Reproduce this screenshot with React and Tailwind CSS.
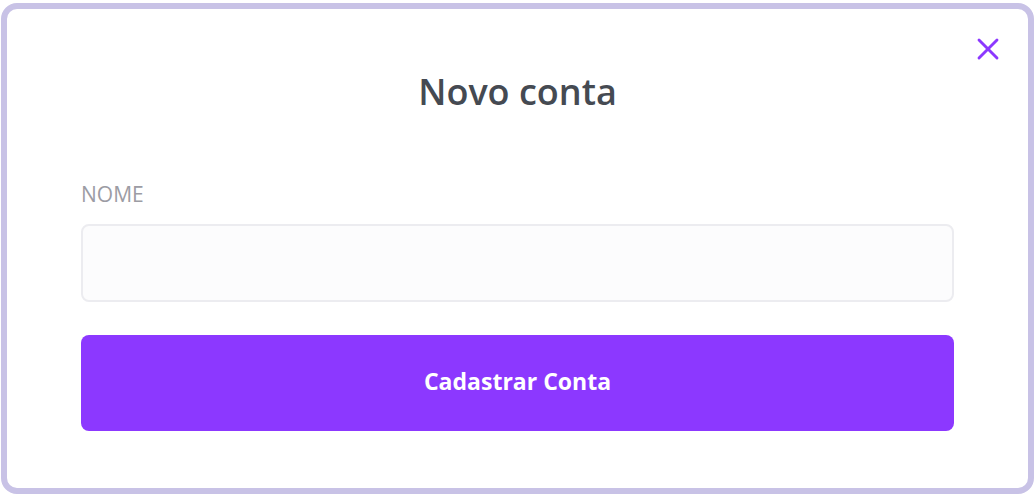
import React from "react";
import { X } from "lucide-react";

export default function App() {
  return (
    <div className="w-[1036px] h-[495px] bg-white pt-[3px] pl-[1px]" style={{ fontFamily: '"Open Sans", sans-serif' }}>
      <div className="relative w-[1033px] h-[491px] border-[6px] border-[#c8c2e6] rounded-[16px] bg-white px-[74px]">
        <button className="absolute right-[22px] top-[22px] text-[#8c38ff]" aria-label="Fechar">
          <X className="w-[36px] h-[36px]" strokeWidth={1.9} />
        </button>

        <h1 className="text-center text-[36px] font-semibold text-[#454a52] pt-[59px] leading-[48px]">
          Novo conta
        </h1>

        <label className="block mt-[66px] text-[21px] text-[#9c9ca4] leading-[24px]">NOME</label>
        <input
          type="text"
          className="block w-full h-[78px] mt-[18px] rounded-[8px] border-2 border-[#ececf0] bg-[#fcfcfd] px-4 outline-none"
        />

        <button className="mt-[33px] w-full h-[96px] pb-[4px] rounded-[8px] bg-[#8c38ff] text-white text-[23px] font-bold">
          Cadastrar Conta
        </button>
      </div>
    </div>
  );
}
